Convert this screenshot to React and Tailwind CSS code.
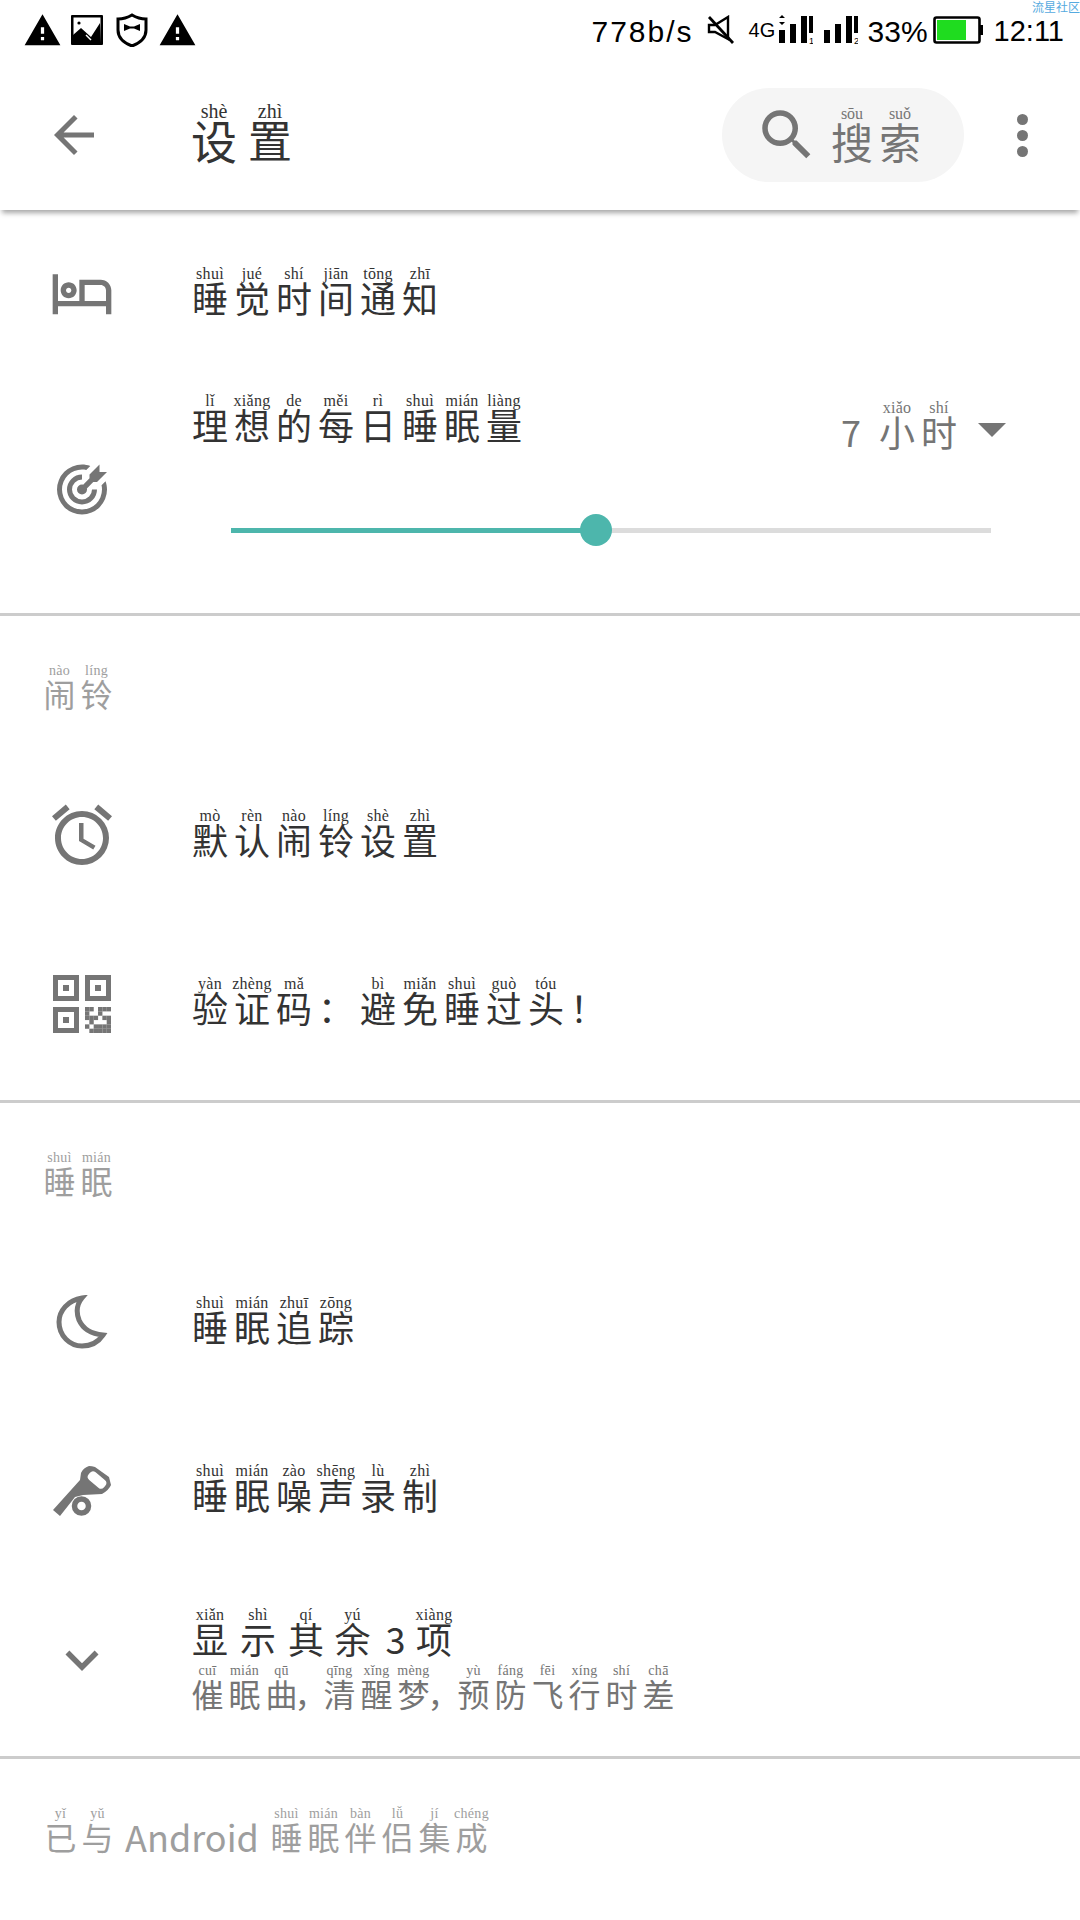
import React from 'react';
import { MdAccessAlarm, MdArrowBack, MdExpandMore, MdOutlineHotel, MdSearch, MdWarning } from 'react-icons/md';

const cjk = { fontFamily: '"Noto Sans CJK SC", "Noto Sans", sans-serif' };
const pinyinFont = { fontFamily: '"Liberation Serif", "DejaVu Serif", serif' };

// one hanzi with its pinyin on top, the cell has a fixed width so long pinyin just overflows
function Cell({ ch, py, width, size, pySize, color }) {
    return (
        <span className={`flex flex-col items-center ${width}`}>
            <span className={`whitespace-nowrap h-[18px] leading-[18px] ${pySize} ${color}`} style={pinyinFont}>
                {py || '\u00a0'}
            </span>
            <span className={`whitespace-nowrap ${size} ${color}`} style={cjk}>
                {ch}
            </span>
        </span>
    );
}

function Pinyin({ items, color = 'text-[#333333]' }) {
    return (
        <div className="flex">
            {items.map((item, i) => (
                <Cell
                    key={i}
                    ch={item[0]}
                    py={item[1]}
                    width={item[2] || 'w-[42px]'}
                    size="text-[36px] leading-[28px] mb-[10px]"
                    pySize="text-[16px] tracking-[0.3px]"
                    color={color}
                />
            ))}
        </div>
    );
}

function SubPinyin({ items, color = 'text-[#757575]' }) {
    return (
        <div className="flex">
            {items.map((item, i) => (
                <Cell
                    key={i}
                    ch={item[0]}
                    py={item[1]}
                    width={item[2] || 'w-[37px]'}
                    size={(item[3] || 'text-[32px]') + ' leading-[26px] mb-[8px]'}
                    pySize="text-[14px] tracking-[0.3px]"
                    color={color}
                />
            ))}
        </div>
    );
}

function ShieldIcon() {
    return (
        <svg viewBox="0 0 32 34" className="w-[32px] h-[34px]">
            <path d="M16 2 C21 5 25 6 30 6 V17 C30 25 24 30 16 33 C8 30 2 25 2 17 V6 C7 6 11 5 16 2 Z" fill="none" stroke="#000" strokeWidth="3" />
            <path d="M8 11 L14 13.5 H18 L24 11 V18 L18 15.5 H14 L8 18 Z" fill="#000" />
        </svg>
    );
}

function PictureIcon() {
    return (
        <svg viewBox="0 0 32 30" className="w-[32px] h-[30px]">
            <rect x="0" y="0" width="32" height="30" rx="1" fill="#000" />
            <rect x="2.5" y="2.5" width="27" height="25" fill="#fff" />
            <path d="M2 28 L2 20 L10 13 L20 22 L29 8 L30 28 Z" fill="#000" />
            <circle cx="8" cy="8" r="1.6" fill="#000" />
            <path d="M15 20 L20 25" stroke="#fff" strokeWidth="1.4" />
        </svg>
    );
}

function MuteIcon() {
    return (
        <svg viewBox="0 0 30 30" className="w-[30px] h-[30px]">
            <path d="M3 10 H9 L22 2 V24 L9 17 H3 Z" fill="none" stroke="#000" strokeWidth="2.4" />
            <path d="M3 2 L27 28" stroke="#000" strokeWidth="2.8" />
        </svg>
    );
}

function SignalIcon({ sim, arrows }) {
    return (
        <svg viewBox="0 0 34 30" className="w-[34px] h-[30px]">
            {arrows && <path d="M3 0 L6 3 H0 Z M3 10 L6 7 H0 Z" fill="#000" />}
            <rect x="0" y="15" width="6" height="13" fill="#000" />
            <rect x="11" y="9" width="6" height="19" fill="#000" />
            <rect x="22" y="1" width="6" height="27" fill="#000" />
            <rect x="30" y="1" width="4" height="17" fill="#000" />
            <text x="30" y="29" fontSize="9" fontFamily="Liberation Sans" fill="#000">{sim}</text>
        </svg>
    );
}

function BatteryIcon() {
    return (
        <svg viewBox="0 0 50 28" className="w-[50px] h-[28px]">
            <rect x="1.5" y="1.5" width="45" height="25" rx="2" fill="none" stroke="#000" strokeWidth="2.6" />
            <rect x="4" y="4" width="29" height="20" fill="#1fdc1f" />
            <rect x="47" y="9" width="3" height="10" fill="#000" />
        </svg>
    );
}

function TargetIcon() {
    return (
        <svg viewBox="0 0 24 24" className="w-[65px] h-[65px]" fill="#757575">
            <path d="M12 2A10 10 0 0 0 2 12A10 10 0 0 0 12 22A10 10 0 0 0 22 12C22 10.84 21.79 9.73 21.41 8.69L19.81 10.29C19.94 10.84 20 11.42 20 12A8 8 0 0 1 12 20A8 8 0 0 1 4 12A8 8 0 0 1 12 4C12.58 4 13.16 4.06 13.71 4.19L15.32 2.59C14.27 2.21 13.16 2 12 2M19 2L15 6V7.5L12.45 10.05C12.3 10 12.15 10 12 10A2 2 0 0 0 10 12A2 2 0 0 0 12 14A2 2 0 0 0 14 12C14 11.85 14 11.7 13.95 11.55L16.5 9H18L22 5H19V2M12 6A6 6 0 0 0 6 12A6 6 0 0 0 12 18A6 6 0 0 0 18 12H16A4 4 0 0 1 12 16A4 4 0 0 1 8 12A4 4 0 0 1 12 8V6Z" />
        </svg>
    );
}

// bottom right block of the qr code, 6x6 modules
const qrCells = ['110111', '100100', '111011', '010001', '101111', '011111'];

function QrIcon() {
    return (
        <svg viewBox="0 0 58 58" className="w-[58px] h-[58px]" fill="#757575">
            <path fillRule="evenodd" d="M0 0H26V26H0ZM5 5V21H21V5ZM10 10H16V16H10Z" />
            <path fillRule="evenodd" d="M32 0H58V26H32ZM37 5V21H53V5ZM42 10H48V16H42Z" />
            <path fillRule="evenodd" d="M0 32H26V58H0ZM5 37V53H21V37ZM10 42H16V48H10Z" />
            {qrCells.map((row, y) =>
                row.split('').map((c, x) =>
                    c === '1' ? <rect key={`${x}-${y}`} x={32 + x * 4.34} y={32 + y * 4.34} width="4.4" height="4.4" /> : null
                )
            )}
        </svg>
    );
}

function MoonIcon() {
    return (
        <svg viewBox="0 0 52 56" className="w-[52px] h-[56px]">
            <path d="M26 3 C12 5 3 16 3 27 C3 41 14 51 26 51 C36 51 43 46 47 40 C36 39 27 34 23 25 C20 17 21 9 26 3 Z" fill="none" stroke="#757575" strokeWidth="5" />
        </svg>
    );
}

function KeyIcon() {
    return (
        <svg viewBox="0 0 58 52" className="w-[58px] h-[52px]" fill="#757575">
            <path d="M0 44 L7 50 L22 31 L30 29 L49 28 Q56 24 58 19 L56 11 L42 1 Q39 0 36 0 Q30 2 28 7 L27 14 Z" />
            <rect x="34" y="9" width="20" height="10" rx="4" fill="#fff" transform="rotate(40 44 14)" />
            <circle cx="28.500" cy="40" r="7" fill="none" stroke="#757575" strokeWidth="5.500" />
        </svg>
    );
}

function Row({ icon, children, height = 'h-[168px]', iconClass = '' }) {
    return (
        <div className={`flex items-center ${height}`}>
            <div className="w-[189px] pl-[52px] flex">
                <div className={`w-[60px] flex justify-center ${iconClass}`}>{icon}</div>
            </div>
            <div className="flex-1">{children}</div>
        </div>
    );
}

function Divider() {
    return <div className="h-[3px] bg-[#cccccc]" />;
}

export default function App() {
    return (
        <div className="w-[1080px] h-[1920px] bg-white overflow-hidden" style={cjk}>
            {/* status bar */}
            <div className="relative h-[60px] flex items-center justify-between pl-[23px] pr-[16px]">
                <div className="flex items-center">
                    <MdWarning className="text-black w-[39px] h-[39px]" />
                    <span className="w-[9px]" />
                    <PictureIcon />
                    <span className="w-[13px]" />
                    <ShieldIcon />
                    <span className="w-[10px]" />
                    <MdWarning className="text-black w-[39px] h-[39px]" />
                </div>
                <div className="flex items-center text-black text-[30px] leading-none" style={{ fontFamily: '"Liberation Sans", sans-serif' }}>
                    <span className="tracking-[2px] mt-[4px]">778b/s</span>
                    <span className="w-[12px]" />
                    <MuteIcon />
                    <span className="w-[13px]" />
                    <span className="text-[20px] w-[30px]">4G</span>
                    <SignalIcon sim="1" arrows />
                    <span className="w-[11px]" />
                    <SignalIcon sim="2" />
                    <span className="w-[10px]" />
                    <span className="mt-[3px]">33%</span>
                    <span className="w-[5px]" />
                    <BatteryIcon />
                    <span className="w-[11px]" />
                    <span className="text-[29px] mt-[3px]">12:11</span>
                </div>
                <span className="absolute right-0 top-0 text-[12px] leading-[13px] text-[#55aae0]" style={cjk}>流星社区</span>
            </div>

            {/* header */}
            <div className="relative z-10 h-[150px] flex items-center bg-white shadow-[0_5px_5px_-2px_rgba(0,0,0,0.35)]">
                <div className="w-[189px] pl-[44px]">
                    <MdArrowBack className="text-[#757575] w-[60px] h-[60px]" />
                </div>
                <div className="flex flex-1 -mt-[2px]">
                    <Cell ch="设" py="shè" width="w-[50px] mr-[6px]" size="text-[46px] leading-[38px] mb-[8px]" pySize="text-[20px]" color="text-[#333333]" />
                    <Cell ch="置" py="zhì" width="w-[50px]" size="text-[44px] leading-[38px] mb-[8px]" pySize="text-[20px]" color="text-[#333333]" />
                </div>
                <div className="w-[242px] h-[94px] rounded-full bg-[#f5f5f5] flex items-center pl-[32px]">
                    <MdSearch className="text-[#757575] w-[66px] h-[66px]" />
                    <div className="flex ml-[8px] -mt-[1px]">
                        <Cell ch="搜" py="sōu" width="w-[48px]" size="text-[42px] leading-[36px] mb-[6px]" pySize="text-[16px]" color="text-[#757575]" />
                        <Cell ch="索" py="suǒ" width="w-[48px]" size="text-[42px] leading-[36px] mb-[6px]" pySize="text-[16px]" color="text-[#757575]" />
                    </div>
                </div>
                <div className="w-[116px] flex flex-col items-center gap-[5px]">
                    <span className="w-[11px] h-[11px] rounded-full bg-[#757575]" />
                    <span className="w-[11px] h-[11px] rounded-full bg-[#757575]" />
                    <span className="w-[11px] h-[11px] rounded-full bg-[#757575]" />
                </div>
            </div>

            <Row height="h-[166px]" icon={<MdOutlineHotel className="text-[#757575] w-[64px] h-[64px] shrink-0" />}>
                <Pinyin items={[['睡', 'shuì'], ['觉', 'jué'], ['时', 'shí'], ['间', 'jiān'], ['通', 'tōng'], ['知', 'zhī']]} />
            </Row>

            <div className="flex h-[237px]">
                <div className="w-[189px] pl-[52px] flex items-center -mt-[10px]">
                    <div className="w-[60px] flex justify-center"><TargetIcon /></div>
                </div>
                <div className="flex-1 pt-[16px]">
                    <div className="flex justify-between items-end pr-[74px]">
                        <Pinyin items={[['理', 'lǐ'], ['想', 'xiǎng'], ['的', 'de'], ['每', 'měi'], ['日', 'rì'], ['睡', 'shuì'], ['眠', 'mián'], ['量', 'liàng']]} />
                        <div className="flex items-center -mb-[7px]">
                            <Pinyin color="text-[#757575]" items={[['7', '', 'w-[50px]'], ['小', 'xiǎo'], ['时', 'shí']]} />
                            <span className="ml-[18px] mt-[6px] w-0 h-0 border-x-[14px] border-x-transparent border-t-[14px] border-t-[#757575]" />
                        </div>
                    </div>
                    <div className="flex items-center ml-[42px] w-[760px] mt-[66px]">
                        <div className="h-[5px] w-[365px] bg-[#4db6ac]" />
                        <div className="w-[32px] h-[32px] rounded-full bg-[#4db6ac] -mx-[16px] relative" />
                        <div className="h-[5px] flex-1 bg-[#dcdcdc]" />
                    </div>
                </div>
            </div>
            <Divider />

            <div className="h-[135px] pl-[41px] pt-[46px]">
                <SubPinyin color="text-[#9e9e9e]" items={[['闹', 'nào'], ['铃', 'líng']]} />
            </div>

            <Row icon={<MdAccessAlarm className="text-[#757575] w-[72px] h-[72px] shrink-0" />}>
                <Pinyin items={[['默', 'mò'], ['认', 'rèn'], ['闹', 'nào'], ['铃', 'líng'], ['设', 'shè'], ['置', 'zhì']]} />
            </Row>
            <Row icon={<QrIcon />} iconClass="mt-[2px]">
                <Pinyin items={[['验', 'yàn'], ['证', 'zhèng'], ['码', 'mǎ'], ['：'], ['避', 'bì'], ['免', 'miǎn'], ['睡', 'shuì'], ['过', 'guò'], ['头', 'tóu'], ['！']]} />
            </Row>
            <div className="h-[13px]" />
            <Divider />

            <div className="h-[135px] pl-[41px] pt-[46px]">
                <SubPinyin color="text-[#9e9e9e]" items={[['睡', 'shuì'], ['眠', 'mián']]} />
            </div>

            <Row icon={<MoonIcon />} iconClass="mt-[2px]">
                <Pinyin items={[['睡', 'shuì'], ['眠', 'mián'], ['追', 'zhuī'], ['踪', 'zōng']]} />
            </Row>
            <Row icon={<KeyIcon />} iconClass="mt-[3px]">
                <Pinyin items={[['睡', 'shuì'], ['眠', 'mián'], ['噪', 'zào'], ['声', 'shēng'], ['录', 'lù'], ['制', 'zhì']]} />
            </Row>

            <div className="flex items-center h-[182px]">
                <div className="w-[189px] pl-[52px] flex -mt-[10px]">
                    <div className="w-[60px] flex justify-center"><MdExpandMore className="text-[#757575] w-[66px] h-[66px] shrink-0" /></div>
                </div>
                <div className="flex-1 -mt-[10px]">
                    <Pinyin items={[['显', 'xiǎn'], ['示', 'shì', 'w-[54px]'], ['其', 'qí'], ['余', 'yú', 'w-[51px]'], ['3', '', 'w-[35px]'], ['项', 'xiàng']]} />
                    <SubPinyin items={[['催', 'cuī'], ['眠', 'mián'], ['曲', 'qū'], ['，', '', 'w-[21px]'], ['清', 'qīng'], ['醒', 'xǐng'], ['梦', 'mèng'], ['，', '', 'w-[23px]'], ['预', 'yù'], ['防', 'fáng'], ['飞', 'fēi'], ['行', 'xíng'], ['时', 'shí'], ['差', 'chā']]} />
                </div>
            </div>
            <Divider />

            <div className="pl-[42px] pt-[46px]">
                <SubPinyin color="text-[#9e9e9e]" items={[['已', 'yǐ'], ['与', 'yǔ'], ['Android', '', 'w-[152px]', 'text-[36px]'], ['睡', 'shuì'], ['眠', 'mián'], ['伴', 'bàn'], ['侣', 'lǚ'], ['集', 'jí'], ['成', 'chéng']]} />
            </div>
        </div>
    );
}
